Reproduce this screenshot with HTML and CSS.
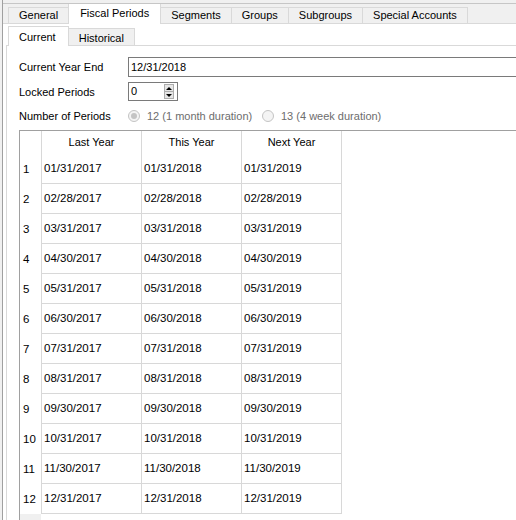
FILE: index.html
```html
<!DOCTYPE html>
<html>
<head>
<meta charset="utf-8">
<link rel="stylesheet" href="styles.css">
</head>
<body>
<div class="window">
  <div class="tabbar outer">
    <div class="tab">General</div>
    <div class="tab active">Fiscal Periods</div>
    <div class="tab">Segments</div>
    <div class="tab">Groups</div>
    <div class="tab">Subgroups</div>
    <div class="tab">Special Accounts</div>
  </div>
  <div class="outer-pane">
    <div class="inner-wrap">
      <div class="tabbar inner">
        <div class="tab active">Current</div>
        <div class="tab">Historical</div>
      </div>
      <div class="inner-pane">
        <div class="form">
          <div class="label">Current Year End</div>
          <div class="field">12/31/2018</div>
          <div class="label">Locked Periods</div>
          <div class="spin">
            <span class="spin-value">0</span>
            <span class="spin-btns">
              <span class="spin-btn"><span class="arrow up"></span></span>
              <span class="spin-btn"><span class="arrow down"></span></span>
            </span>
          </div>
          <div class="label">Number of Periods</div>
          <div class="radios">
            <div class="radio first"><span class="circle checked"></span>12 (1 month duration)</div>
            <div class="radio"><span class="circle"></span>13 (4 week duration)</div>
          </div>
        </div>
        <div class="grid">
          <div class="corner"></div>
          <div class="hcell">Last Year</div>
          <div class="hcell">This Year</div>
          <div class="hcell last">Next Year</div>
          <div class="rest"></div>

          <div class="rh">1</div><div class="cell">01/31/2017</div><div class="cell">01/31/2018</div><div class="cell last">01/31/2019</div><div class="rest"></div>
          <div class="rh">2</div><div class="cell">02/28/2017</div><div class="cell">02/28/2018</div><div class="cell last">02/28/2019</div><div class="rest"></div>
          <div class="rh">3</div><div class="cell">03/31/2017</div><div class="cell">03/31/2018</div><div class="cell last">03/31/2019</div><div class="rest"></div>
          <div class="rh">4</div><div class="cell">04/30/2017</div><div class="cell">04/30/2018</div><div class="cell last">04/30/2019</div><div class="rest"></div>
          <div class="rh">5</div><div class="cell">05/31/2017</div><div class="cell">05/31/2018</div><div class="cell last">05/31/2019</div><div class="rest"></div>
          <div class="rh">6</div><div class="cell">06/30/2017</div><div class="cell">06/30/2018</div><div class="cell last">06/30/2019</div><div class="rest"></div>
          <div class="rh">7</div><div class="cell">07/31/2017</div><div class="cell">07/31/2018</div><div class="cell last">07/31/2019</div><div class="rest"></div>
          <div class="rh">8</div><div class="cell">08/31/2017</div><div class="cell">08/31/2018</div><div class="cell last">08/31/2019</div><div class="rest"></div>
          <div class="rh">9</div><div class="cell">09/30/2017</div><div class="cell">09/30/2018</div><div class="cell last">09/30/2019</div><div class="rest"></div>
          <div class="rh">10</div><div class="cell">10/31/2017</div><div class="cell">10/31/2018</div><div class="cell last">10/31/2019</div><div class="rest"></div>
          <div class="rh">11</div><div class="cell">11/30/2017</div><div class="cell">11/30/2018</div><div class="cell last">11/30/2019</div><div class="rest"></div>
          <div class="rh">12</div><div class="cell">12/31/2017</div><div class="cell">12/31/2018</div><div class="cell last">12/31/2019</div><div class="rest"></div>

          <div class="rh-fill"></div>
        </div>
      </div>
    </div>
  </div>
</div>
</body>
</html>
```

FILE: styles.css
```css
html, body {
  margin: 0;
  padding: 0;
}

body {
  width: 516px;
  height: 520px;
  overflow: hidden;
  background: #f0f0f0;
  font-family: "Liberation Sans", Arial, sans-serif;
  font-size: 11px;
  color: #000;
}

.window {
  margin-left: 2px;
  border-left: 1px solid #a0a0a0;
  width: 600px;
  height: 520px;
  padding-top: 3px;
  box-sizing: border-box;
  display: flex;
  flex-direction: column;
}

/* tab bars */
.tabbar {
  display: flex;
  align-items: flex-end;
}

.tab {
  box-sizing: border-box;
  border: 1px solid #d9d9d9;
  border-bottom: none;
  background: #f0f0f0;
  padding: 0 10px;
  margin-right: -1px;
  white-space: nowrap;
}

.tab.active {
  background: #fff;
  position: relative;
  z-index: 1;
  margin-bottom: -1px;
}

.tabbar.outer {
  border-top: 1px solid #c6c6c6;
  padding-left: 5px;
  height: 20px;
  box-sizing: border-box;
}

.tabbar.outer .tab {
  height: 16px;
  line-height: 15px;
}

.tabbar.outer .tab.active {
  height: 20px;
  line-height: 19px;
  border-top: none;
  padding: 0 11px;
}

.outer-pane {
  flex: 1;
  border-top: 1px solid #d9d9d9;
  background: #fff;
  display: flex;
  flex-direction: column;
}

.inner-wrap {
  margin-left: 3px;
  flex: 1;
  display: flex;
  flex-direction: column;
}

.tabbar.inner {
  padding-left: 2px;
  padding-top: 1px;
  height: 20px;
}

.tabbar.inner .tab {
  height: 17px;
  line-height: 18px;
}

.tabbar.inner .tab.active {
  height: 20px;
  line-height: 20px;
  padding: 0 12px 0 10px;
}

.inner-pane {
  flex: 1;
  border-top: 1px solid #d9d9d9;
  border-left: 1px solid #d9d9d9;
  background: #fff;
  padding: 11px 0 0 12px;
}

/* form */
.form {
  display: grid;
  grid-template-columns: 109px 1fr;
  grid-template-rows: 20px 19px 20px;
  row-gap: 5px;
  align-items: center;
}

.field {
  height: 20px;
  box-sizing: border-box;
  border: 1px solid #7a7a7a;
  padding-left: 2px;
  line-height: 18px;
}

.spin {
  width: 50px;
  height: 19px;
  box-sizing: border-box;
  border: 1px solid #7a7a7a;
  display: flex;
}

.spin-value {
  flex: 1;
  padding-left: 2px;
  line-height: 17px;
}

.spin-btns {
  width: 10px;
  margin: 1px 3px 1px 0;
  display: flex;
  flex-direction: column;
  border: 1px solid #adadad;
  box-sizing: border-box;
  background: #e6e6e6;
}

.spin-btn {
  flex: 1;
  display: flex;
  align-items: center;
  justify-content: center;
}

.spin-btn + .spin-btn {
  border-top: 1px solid #adadad;
}

.arrow {
  width: 0;
  height: 0;
  border-left: 3px solid transparent;
  border-right: 3px solid transparent;
}

.arrow.up {
  border-bottom: 3px solid #000;
}

.arrow.down {
  border-top: 3px solid #000;
}

.radios {
  display: flex;
  align-items: center;
  color: #6d6d6d;
  margin-top: -1px;
}

.radio {
  display: flex;
  align-items: center;
  white-space: nowrap;
}

.radio.first {
  width: 134px;
}

.circle {
  width: 12px;
  height: 12px;
  box-sizing: border-box;
  border: 1px solid #c4c4c4;
  border-radius: 50%;
  background: #f4f4f4;
  margin-right: 7px;
  display: flex;
  align-items: center;
  justify-content: center;
}

.circle.checked::after {
  content: "";
  width: 6px;
  height: 6px;
  border-radius: 50%;
  background: #c4c4c4;
}

/* table */
.grid {
  margin-top: 4px;
  border-left: 1px solid #a0a0a0;
  border-top: 1px solid #a0a0a0;
  background: #fff;
  display: grid;
  grid-template-columns: 21px 100px 100px 101px 1fr;
  grid-template-rows: 23px repeat(12, 30px) 40px;
}

.hcell {
  border-left: 1px solid #d8d8d8;
  text-align: center;
  line-height: 22px;
}

.hcell.last,
.cell.last {
  border-right: 1px solid #d8d8d8;
}

.rh {
  padding-left: 3px;
  line-height: 30px;
  font-size: 11.5px;
}

.cell {
  border-left: 1px solid #d8d8d8;
  border-bottom: 1px solid #d8d8d8;
  padding-left: 2px;
  line-height: 29px;
  font-size: 11.5px;
}

.rh-fill {
  background: #f0f0f0;
}
```
